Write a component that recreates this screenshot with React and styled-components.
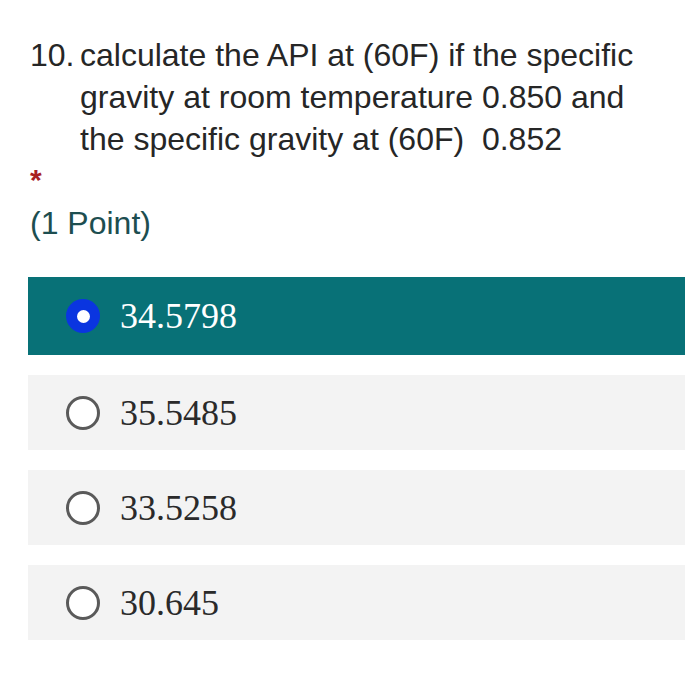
import React from "react";
import styled, { createGlobalStyle } from "styled-components";

const Global = createGlobalStyle`
  html, body { margin: 0; padding: 0; background: #ffffff; }
  body { width: 700px; height: 684px; overflow: hidden; }
`;

const Page = styled.div`
  padding: 34px 15px 0 28px;
  font-family: "Liberation Sans", Arial, sans-serif;
`;

const Question = styled.div`
  display: flex;
  font-size: 32px;
  line-height: 42px;
  color: #262626;
  padding-right: 35px;
`;

const Num = styled.span`
  width: 52px;
  flex: none;
  padding-left: 2px;
  box-sizing: border-box;
`;

const QText = styled.span`
  flex: 1;
`;

const Star = styled.div`
  color: #a8221f;
  font-size: 30px;
  font-weight: bold;
  line-height: 24px;
  margin: 8px 0 0 2px;
`;

const Points = styled.div`
  color: #1d4e50;
  font-size: 32px;
  line-height: 36px;
  margin-top: 13px;
  padding-left: 2px;
`;

const Options = styled.div`
  display: flex;
  flex-direction: column;
  gap: 20px;
  margin-top: 36px;
`;

const Option = styled.div`
  display: flex;
  align-items: center;
  gap: 20px;
  height: ${(p) => (p.$selected ? 78 : 75)}px;
  padding-left: 38px;
  background: ${(p) => (p.$selected ? "#087177" : "#f3f3f3")};
  color: ${(p) => (p.$selected ? "#ffffff" : "#2a2a2a")};
  font-family: "Liberation Serif", "Times New Roman", serif;
  font-size: 36px;
`;

const Radio = styled.span`
  width: 34px;
  height: 34px;
  flex: none;
  box-sizing: border-box;
  border-radius: 50%;
  display: flex;
  align-items: center;
  justify-content: center;
  ${(p) =>
    p.$on
      ? `background: #0a35e0; border: none;`
      : `background: #ffffff; border: 3px solid #5a5a5a;`}
`;

const Dot = styled.span`
  width: 13px;
  height: 13px;
  border-radius: 50%;
  background: #ffffff;
`;

const options = ["34.5798", "35.5485", "33.5258", "30.645"];

export default function App() {
  return (
    <>
      <Global />
      <Page>
        <Question>
          <Num>10.</Num>
          <QText>
            calculate the API at (60F) if the specific gravity at room
            temperature 0.850 and the specific gravity at (60F)&nbsp; 0.852
          </QText>
        </Question>
        <Star>*</Star>
        <Points>(1 Point)</Points>
        <Options>
          {options.map((o, i) => (
            <Option key={o} $selected={i === 0}>
              <Radio $on={i === 0}>{i === 0 && <Dot />}</Radio>
              {o}
            </Option>
          ))}
        </Options>
      </Page>
    </>
  );
}
